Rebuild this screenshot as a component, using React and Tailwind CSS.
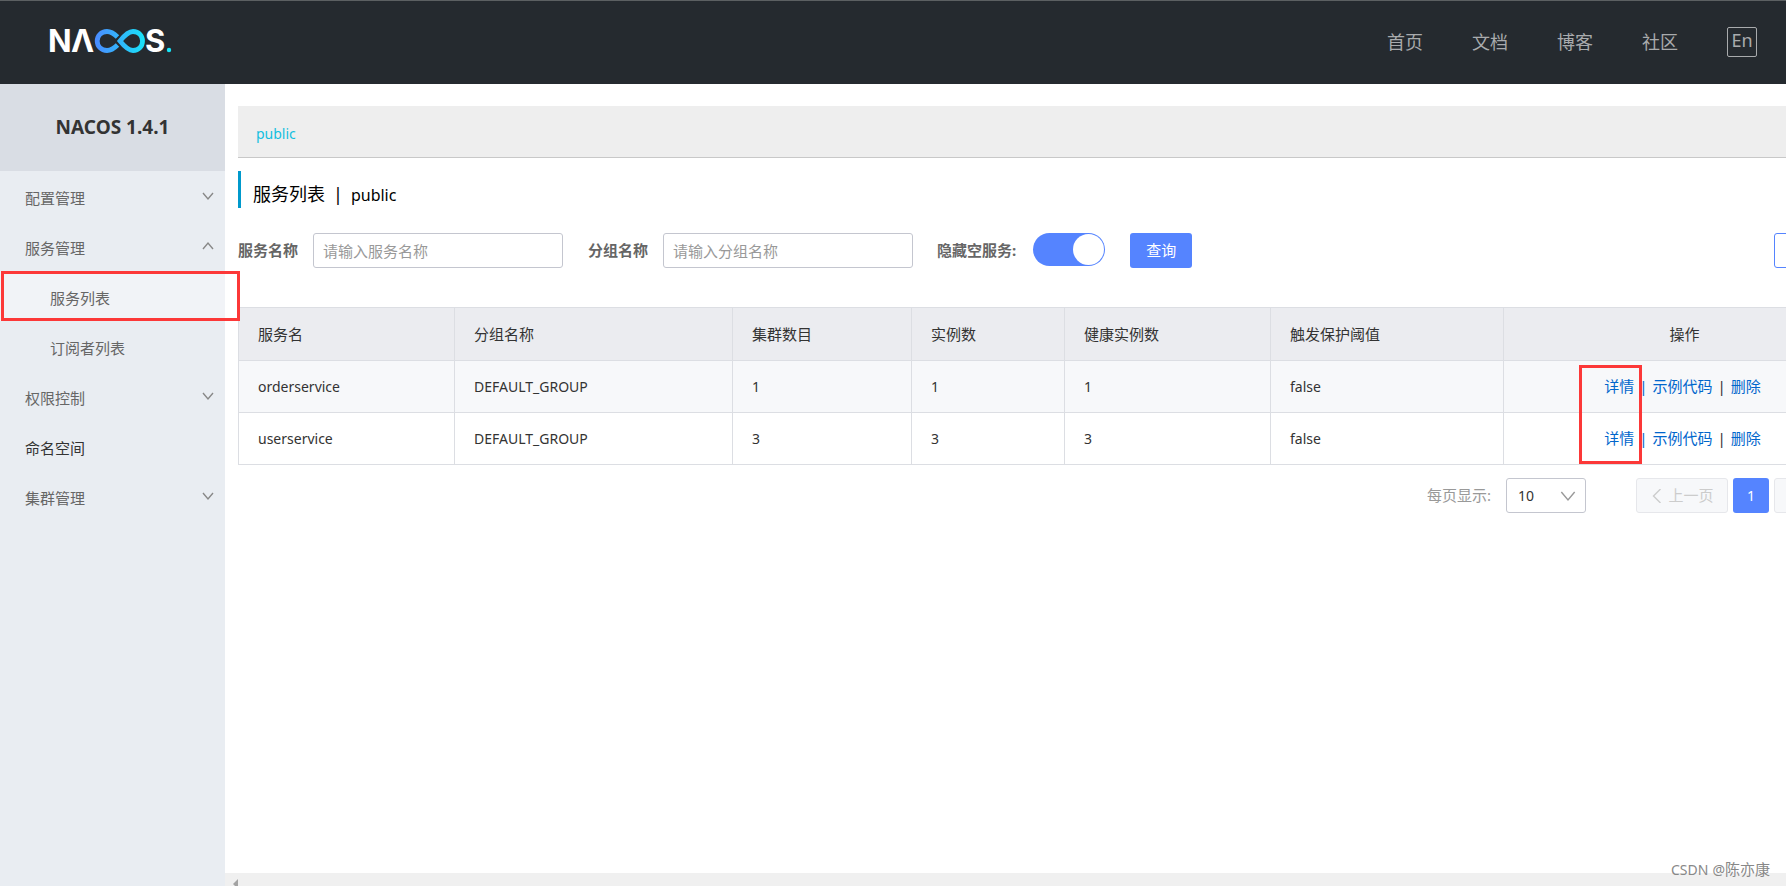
import React from 'react';

const NAV = ['首页', '文档', '博客', '社区'];

const MENU = [
  { label: '配置管理', arrow: 'down' },
  {
    label: '服务管理',
    arrow: 'up',
    children: [{ label: '服务列表', active: true }, { label: '订阅者列表' }],
  },
  { label: '权限控制', arrow: 'down' },
  { label: '命名空间' },
  { label: '集群管理', arrow: 'down' },
];

const COLUMNS = ['服务名', '分组名称', '集群数目', '实例数', '健康实例数', '触发保护阈值'];

const ROWS = [
  ['orderservice', 'DEFAULT_GROUP', '1', '1', '1', 'false'],
  ['userservice', 'DEFAULT_GROUP', '3', '3', '3', 'false'],
];

function Chevron({ direction = 'down', className }) {
  const d = { down: 'M1 3 L6 9 L11 3', up: 'M1 9 L6 3 L11 9', left: 'M9 0 L3 6 L9 12' }[direction];
  return (
    <svg viewBox="0 0 12 12" className={className} fill="none" stroke="currentColor" strokeWidth="1.4" aria-hidden="true">
      <path d={d} vectorEffect="non-scaling-stroke" />
    </svg>
  );
}

function Logo() {
  return (
    <svg viewBox="-4 -12 130 48" className="h-12 w-[130px]" role="img" aria-label="NACOS">
      <defs>
        <linearGradient id="loop" gradientUnits="userSpaceOnUse" x1="46" y1="0" x2="96" y2="0">
          <stop offset="0" stopColor="#4a8cff" />
          <stop offset="1" stopColor="#17e5f8" />
        </linearGradient>
      </defs>
      <g fill="#fff" fontFamily="Inter, sans-serif" fontSize="31" fontWeight="700">
        <text x="-2" y="23">N</text>
        <text x="21" y="23">Λ</text>
        <text x="95" y="23">S</text>
      </g>
      <g fill="none" stroke="url(#loop)" strokeWidth="4.8">
        <path d="M67.500 8 C64 4.500 60.500 2.500 57 2.500 C51 2.500 47.200 7 47.200 12 C47.200 17 51 21.500 57 21.500 C60.500 21.500 64 19.500 67.500 16" />
        <path d="M70 12 C74 7 78 2.500 83 2.500 C89 2.500 92.500 7 92.500 12 C92.500 17 89 21.500 83 21.500 C78 21.500 74 17 70 12 Z" />
      </g>
      <circle cx="119" cy="21" r="2.200" fill="#17e5f8" />
    </svg>
  );
}

function Header() {
  return (
    <header className="flex h-[84px] shrink-0 items-center justify-between border-t border-[#5c6062] bg-[#252a2f] pr-[29px] pl-[46px]">
      <a href="#home" className="block pb-1">
        <Logo />
      </a>
      <nav className="flex items-center gap-[49px] pb-px text-[18px] text-[#a9abad]">
        {NAV.map((n) => (
          <a key={n} href={'#' + n} className="leading-6">
            {n}
          </a>
        ))}
        <button type="button" className="flex h-[30px] w-[30px] justify-center rounded-xs border border-[#a9abad] leading-6">
          En
        </button>
      </nav>
    </header>
  );
}

function Sidebar() {
  return (
    <aside className="w-[225px] shrink-0 bg-[#e9edf2]">
      <h1 className="flex h-[87px] items-center justify-center bg-[#d9dde4] text-[19px] font-bold text-[#333]">NACOS 1.4.1</h1>
      <ul className="text-[15px] text-[#666]">
        {MENU.map((m) => (
          <li key={m.label}>
            <a
              href={'#' + m.label}
              className={'flex h-[50px] items-center justify-between pt-1 pr-[11px] pl-[25px] ' + (m.arrow ? '' : 'text-[#333]')}
            >
              {m.label}
              {m.arrow && <Chevron direction={m.arrow} className="mb-1 h-3 w-3 text-[#888]" />}
            </a>
            {m.children && (
              <ul>
                {m.children.map((c) => (
                  <li key={c.label} className={c.active ? 'relative bg-[#f1f3f7]' : ''}>
                    <a href={'#' + c.label} className="flex h-[50px] items-center pt-1 pl-[50px]">
                      {c.label}
                    </a>
                    {c.active && <div className="pointer-events-none absolute inset-y-0 -right-[15px] left-px z-10 border-3 border-[#fc3838]" />}
                  </li>
                ))}
              </ul>
            )}
          </li>
        ))}
      </ul>
    </aside>
  );
}

function SearchForm() {
  const input = 'ml-[15px] h-[35px] w-[250px] rounded-[3px] border border-[#c4c6cf] bg-white px-[9px] placeholder:text-[#999]';
  return (
    <form className="mt-[25px] flex items-center text-[15px]">
      <label htmlFor="service" className="font-bold text-[#666]">服务名称</label>
      <input id="service" className={input} placeholder="请输入服务名称" />
      <label htmlFor="group" className="ml-[25px] font-bold text-[#666]">分组名称</label>
      <input id="group" className={input} placeholder="请输入分组名称" />
      <label htmlFor="hide" className="ml-6 font-bold text-[#666]">隐藏空服务:</label>
      <input
        id="hide"
        type="checkbox"
        role="switch"
        defaultChecked
        className="mb-0.5 ml-[17px] flex h-[33px] w-[72px] appearance-none justify-end rounded-full bg-[#5584ff] p-px before:h-[31px] before:w-[31px] before:rounded-full before:bg-white before:content-['']"
      />
      <button type="button" className="ml-[25px] h-[35px] w-[62px] rounded-[3px] bg-[#5584ff] text-white">查询</button>
      <button type="button" aria-label="create" className="ml-auto h-[35px] w-[92px] rounded-[3px] border border-[#5584ff]" />
    </form>
  );
}

function ServiceTable() {
  const cell = 'border border-[#dcdee3] px-[19px] text-left font-normal';
  return (
    <div className="relative mt-[39px]">
      <table className="w-full table-fixed border-collapse text-[15px] text-[#333]">
        <colgroup>
          <col className="w-[216px]" />
          <col className="w-[278px]" />
          <col className="w-[179px]" />
          <col className="w-[153px]" />
          <col className="w-[206px]" />
          <col className="w-[233px]" />
          <col />
        </colgroup>
        <thead className="bg-[#ebecf0]">
          <tr className="h-[53px]">
            {COLUMNS.map((c) => (
              <th key={c} className={cell}>{c}</th>
            ))}
            <th className="border border-[#dcdee3] text-center font-normal">操作</th>
          </tr>
        </thead>
        <tbody>
          {ROWS.map((r, i) => (
            <tr key={r[0]} className={i === 0 ? 'h-[52px] bg-[#f7f8fa]' : 'h-[52px] bg-white'}>
              {r.map((v, j) => (
                <td key={j} className={cell + ' text-[14px]'}>{v}</td>
              ))}
              <td className="border border-[#dcdee3] text-[#06c]">
                <div className="flex justify-center gap-[5px] pr-1">
                  <a href="#detail">详情</a>
                  <span>|</span>
                  <a href="#code">示例代码</a>
                  <span className="text-[#333]">|</span>
                  <a href="#delete">删除</a>
                </div>
              </td>
            </tr>
          ))}
        </tbody>
      </table>
      <div className="pointer-events-none absolute right-[224px] bottom-px h-[99px] w-[63px] border-3 border-[#fc3838]" />
    </div>
  );
}

function Pagination() {
  return (
    <div className="mt-[13px] flex items-center justify-end text-[15px]">
      <label htmlFor="size" className="text-[#999]">每页显示:</label>
      <div className="relative ml-[15px]">
        <select id="size" className="h-[35px] w-20 appearance-none rounded-[3px] border border-[#c4c6cf] bg-white pl-[11px] text-[14px] text-[#333]">
          <option>10</option>
        </select>
        <Chevron className="pointer-events-none absolute top-[10px] right-[10px] h-4 w-4 text-[#999]" />
      </div>
      <button type="button" disabled className="ml-[50px] flex h-[35px] w-[92px] items-center justify-center gap-1 rounded-[3px] border border-[#e6e7eb] bg-[#f7f8fa] text-[#ccc]">
        <Chevron direction="left" className="h-[14px] w-[14px]" />
        上一页
      </button>
      <button type="button" className="ml-[5px] h-[35px] w-9 rounded-[3px] bg-[#5584ff] text-[14px] text-white">1</button>
      <button type="button" disabled aria-label="next" className="ml-[5px] h-[35px] w-[92px] rounded-[3px] border border-[#e6e7eb] bg-[#f7f8fa]" />
    </div>
  );
}

export default function App() {
  return (
    <div className="relative flex h-screen flex-col overflow-hidden bg-white font-['Noto_Sans','Noto_Sans_CJK_SC',sans-serif]">
      <Header />
      <div className="flex min-h-0 flex-1">
        <Sidebar />
        <div className="flex min-w-0 flex-1 flex-col">
          <main className="min-h-0 flex-1 overflow-hidden pt-[22px] pl-[13px]">
            <div className="w-[1628px]">
              <div className="flex h-[52px] items-center border-b border-[#c8c8c8] bg-[#eee] pt-1 pl-[18px] text-[14px] text-[#13bfe0]">public</div>
              <h2 className="mt-[13px] flex h-[37px] items-center gap-2 border-l-3 border-[#09c] pt-[10px] pl-3 text-[18px] text-black">
                <span>服务列表</span>
                <span>|</span>
                <span className="text-[16px]">public</span>
              </h2>
              <SearchForm />
              <ServiceTable />
              <Pagination />
            </div>
          </main>
          <div className="flex h-[13px] shrink-0 items-end bg-[#f0f0f0] pl-2">
            <svg viewBox="0 0 5 7" className="h-[7px] w-[5px]" aria-hidden="true">
              <path d="M5 0 V7 H2 L0 5 Z" fill="#a3a3a3" />
            </svg>
          </div>
        </div>
      </div>
      <div className="absolute right-4 bottom-[6px] flex items-baseline gap-1 text-[14px] text-[#888]">
        <span>CSDN</span>
        <span>@<span className="text-[15px]">陈亦康</span></span>
      </div>
    </div>
  );
}
